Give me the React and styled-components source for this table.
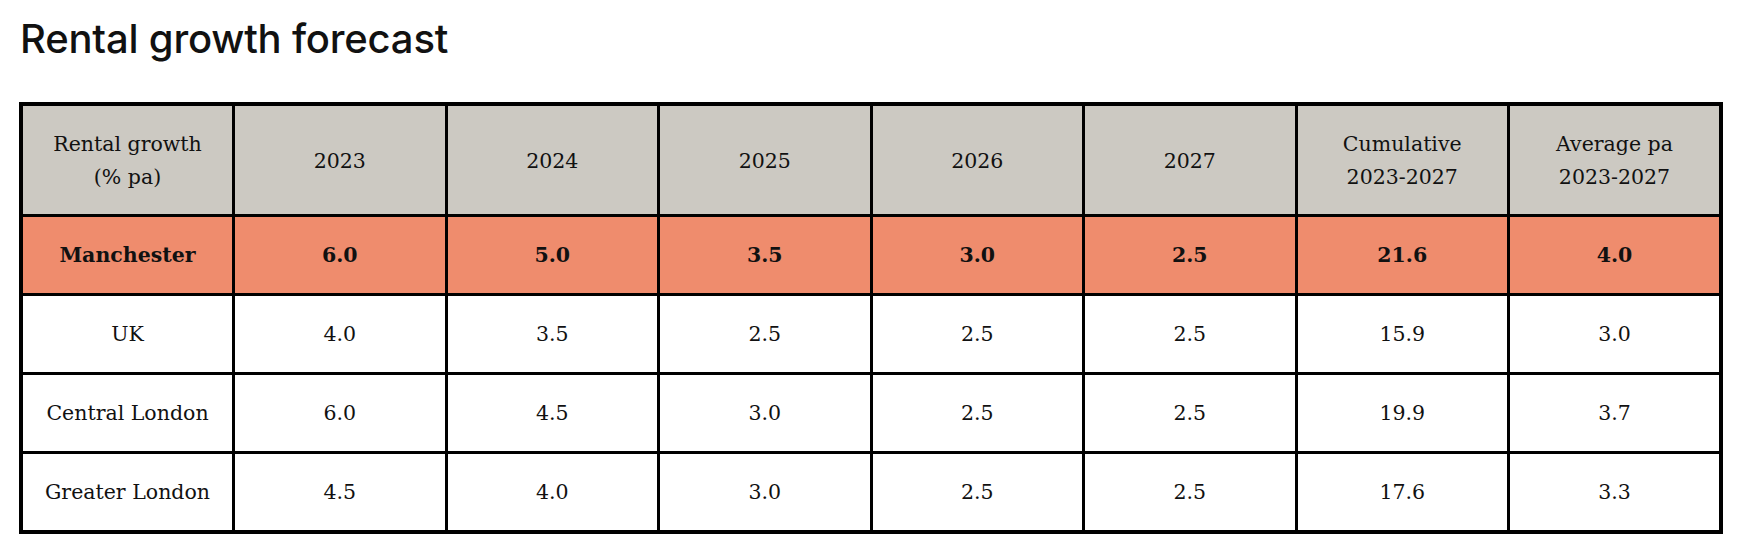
import styled, { createGlobalStyle } from "styled-components";

const GlobalStyle = createGlobalStyle`
    html, body {
        margin: 0;
        padding: 0;
        background: #fff;
    }
`

const Page = styled.div`
    padding: 0 21px 0 19px;
    color: #111;
`

const Title = styled.h2`
    font-family: Inter, "Noto Sans", sans-serif;
    font-weight: 500;
    font-size: 40px;
    line-height: 48px;
    margin: 15px 0 39px 1px;
    letter-spacing: -0.2px;
`

const Table = styled.table`
    width: 1704px;
    table-layout: fixed;
    border-collapse: collapse;
    border: 4px solid #000;
    font-family: "DejaVu Serif", "Liberation Serif", serif;
    font-size: 20.5px;
`

const HeadCell = styled.th`
    background: #ccc9c2;
    border: 3px solid #000;
    height: 106px;
    padding: 2px 8px 0;
    font-weight: 400;
    line-height: 33px;
    text-align: center;
    vertical-align: middle;
`

const Cell = styled.td`
    background: ${(p) => (p.$highlight ? "#ef8c6d" : "#fff")};
    font-weight: ${(p) => (p.$highlight ? 700 : 400)};
    border: 3px solid #000;
    height: 76px;
    padding: 0 6px;
    text-align: center;
    vertical-align: middle;
`

const headers = [
    ["Rental growth", "(% pa)"],
    ["2023"],
    ["2024"],
    ["2025"],
    ["2026"],
    ["2027"],
    ["Cumulative", "2023-2027"],
    ["Average pa", "2023-2027"],
]

const rows = [
    { name: "Manchester", values: ["6.0", "5.0", "3.5", "3.0", "2.5", "21.6", "4.0"], highlight: true },
    { name: "UK", values: ["4.0", "3.5", "2.5", "2.5", "2.5", "15.9", "3.0"] },
    { name: "Central London", values: ["6.0", "4.5", "3.0", "2.5", "2.5", "19.9", "3.7"] },
    { name: "Greater London", values: ["4.5", "4.0", "3.0", "2.5", "2.5", "17.6", "3.3"] },
]

const App = function () {
    return (
        <>
            <GlobalStyle />
            <Page>
                <Title>Rental growth forecast</Title>
                <Table>
                    <thead>
                        <tr>
                            {headers.map((lines, i) => (
                                <HeadCell key={i}>
                                    {lines.map((l, j) => (
                                        <div key={j}>{l}</div>
                                    ))}
                                </HeadCell>
                            ))}
                        </tr>
                    </thead>
                    <tbody>
                        {rows.map((row) => (
                            <tr key={row.name}>
                                <Cell $highlight={row.highlight}>{row.name}</Cell>
                                {row.values.map((v, i) => (
                                    <Cell key={i} $highlight={row.highlight}>{v}</Cell>
                                ))}
                            </tr>
                        ))}
                    </tbody>
                </Table>
            </Page>
        </>
    )
}

export default App;
